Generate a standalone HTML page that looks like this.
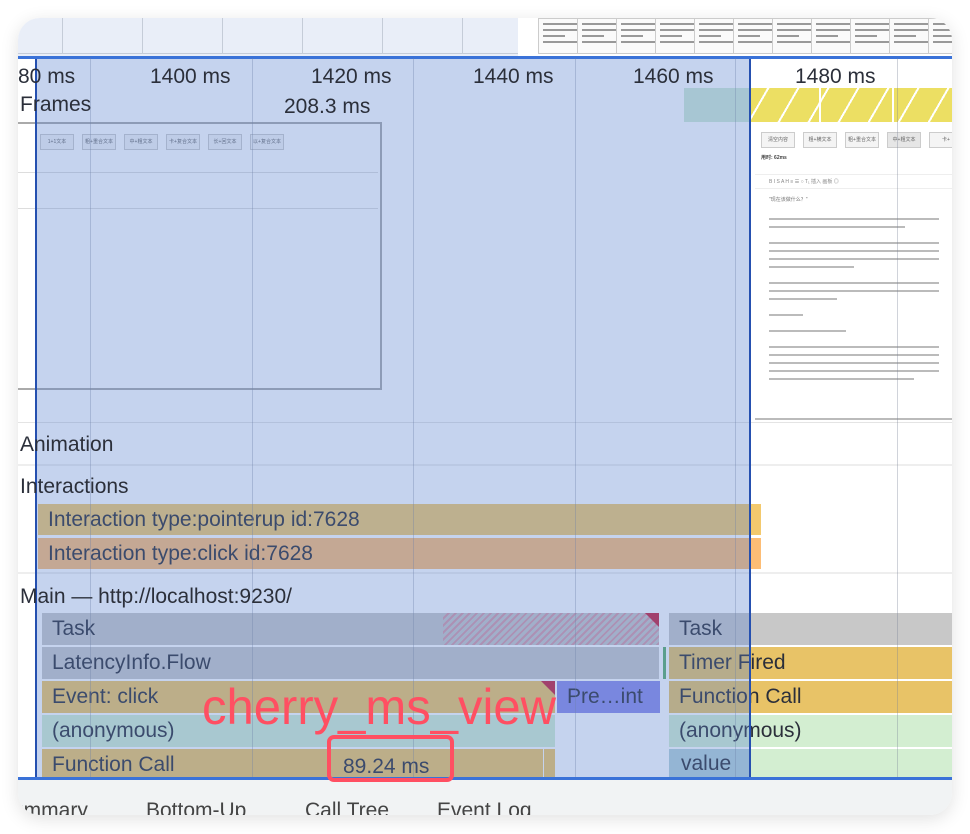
<!DOCTYPE html>
<html><head><meta charset="utf-8"><style>
*{margin:0;padding:0;box-sizing:border-box}
body{width:970px;height:834px;background:#fff;position:relative;overflow:hidden;font-family:"Liberation Sans","Noto Sans CJK SC",sans-serif;color:#2b2f3a}
.card{position:absolute;left:18px;top:18px;width:934px;height:797px;border-radius:22px;overflow:hidden;background:#fff;box-shadow:0 4px 18px rgba(0,0,0,.12)}
.a{position:absolute}
.t{position:absolute;font-size:21px;white-space:nowrap;line-height:1}
.g{position:absolute;top:40px;width:1px;height:720px;background:rgba(120,130,150,.35)}
.bar{position:absolute;height:32px;font-size:21px;line-height:32px;padding-left:10px;white-space:nowrap;overflow:hidden;color:#2b2f3a}
.thumb{position:absolute;top:0;height:36px;width:56px;background:#fafafa;border:1px solid #ccc}
.thumb i{display:block;height:2px;margin:4px 4px 0;background:#999;width:70%}
.btn{position:absolute;top:10px;width:34px;height:16px;border:1px solid #ccc;background:#f4f4f4;font-size:5px;text-align:center;line-height:14px;color:#666}
.ln{height:2px;background:#bbb;margin:6px 0 0}
</style></head><body>
<div class="card">
 <div class="a" style="left:0;top:0;width:934px;height:38px;background:#fff"></div>
 <div class="a" style="left:0;top:0;width:500px;height:38px;background:#e9eef8"></div>
 <div class="a" style="left:44px;top:0;width:1px;height:36px;background:#c5ccd8"></div>
 <div class="a" style="left:124px;top:0;width:1px;height:36px;background:#c5ccd8"></div>
 <div class="a" style="left:204px;top:0;width:1px;height:36px;background:#c5ccd8"></div>
 <div class="a" style="left:284px;top:0;width:1px;height:36px;background:#c5ccd8"></div>
 <div class="a" style="left:364px;top:0;width:1px;height:36px;background:#c5ccd8"></div>
 <div class="a" style="left:444px;top:0;width:1px;height:36px;background:#c5ccd8"></div>
 <div class="a" style="left:0;top:35px;width:500px;height:1px;background:#c5ccd8"></div>
 <div class="thumb" style="left:520px"><i></i><i></i><i style="width:40%"></i><i></i></div>
 <div class="thumb" style="left:559px"><i></i><i></i><i style="width:40%"></i><i></i></div>
 <div class="thumb" style="left:598px"><i></i><i></i><i style="width:40%"></i><i></i></div>
 <div class="thumb" style="left:637px"><i></i><i></i><i style="width:40%"></i><i></i></div>
 <div class="thumb" style="left:676px"><i></i><i></i><i style="width:40%"></i><i></i></div>
 <div class="thumb" style="left:715px"><i></i><i></i><i style="width:40%"></i><i></i></div>
 <div class="thumb" style="left:754px"><i></i><i></i><i style="width:40%"></i><i></i></div>
 <div class="thumb" style="left:793px"><i></i><i></i><i style="width:40%"></i><i></i></div>
 <div class="thumb" style="left:832px"><i></i><i></i><i style="width:40%"></i><i></i></div>
 <div class="thumb" style="left:871px"><i></i><i></i><i style="width:40%"></i><i></i></div>
 <div class="thumb" style="left:910px"><i></i><i></i><i style="width:40%"></i><i></i></div>
 <div class="a" style="left:0;top:38px;width:934px;height:3px;background:#3a72d8"></div>

 <div class="a" style="left:666px;top:70px;width:67px;height:34px;background:#d2ecd6"></div>
 <div class="a" style="left:733px;top:70px;width:201px;height:34px;background:#ecdf63;background-image:repeating-linear-gradient(120deg,transparent 0 14px,#fff 14px 16px,transparent 16px 26px)"></div>
 <div class="a" style="left:801px;top:70px;width:2px;height:34px;background:#fff"></div>
 <div class="a" style="left:874px;top:70px;width:2px;height:34px;background:#fff"></div>
 <div class="a" style="left:0;top:104px;width:364px;height:268px;background:#fff;border:2px solid #aaa;border-left:none">
  <div class="btn" style="left:22px">1+1文本</div><div class="btn" style="left:64px">粗+重合文本</div><div class="btn" style="left:106px">中+粗文本</div><div class="btn" style="left:148px">卡+复合文本</div><div class="btn" style="left:190px">长+回文本</div><div class="btn" style="left:232px">以+复合文本</div>
  <div class="a" style="left:0;top:48px;width:360px;height:1px;background:#ddd"></div>
  <div class="a" style="left:0;top:84px;width:360px;height:1px;background:#ddd"></div>
 </div>
 <div class="a" style="left:737px;top:104px;width:197px;height:296px;background:#fff;font-size:5px;color:#777;line-height:8px">
  <div class="btn" style="left:6px;top:10px">清空内容</div><div class="btn" style="left:48px;top:10px">粗+横文本</div><div class="btn" style="left:90px;top:10px">粗+重合文本</div><div class="btn" style="left:132px;top:10px;background:#e6e6e6">中+粗文本</div><div class="btn" style="left:174px;top:10px">卡+</div>
  <div class="a" style="left:6px;top:32px;font-weight:bold;color:#444">用时: 62ms</div>
  <div class="a" style="left:0;top:52px;width:197px;height:1px;background:#eee"></div>
  <div class="a" style="left:14px;top:56px;color:#888">B I S A H ≡ ☰ ○ T₁ 插入 画板 ◎</div>
  <div class="a" style="left:0;top:66px;width:197px;height:1px;background:#eee"></div>
  <div class="a" style="left:14px;top:74px;width:170px">
   <div>"现在该做什么？"</div><br>
   <div class="ln"></div><div class="ln" style="width:80%"></div><br>
   <div class="ln"></div><div class="ln"></div><div class="ln"></div><div class="ln" style="width:50%"></div><br>
   <div class="ln"></div><div class="ln"></div><div class="ln" style="width:40%"></div><br>
   <div class="ln" style="width:20%"></div><br><div class="ln" style="width:45%"></div><br>
   <div class="ln"></div><div class="ln"></div><div class="ln"></div><div class="ln"></div><div class="ln" style="width:85%"></div>
  </div>
 </div>
 <div class="a" style="left:737px;top:400px;width:197px;height:2px;background:#bbb"></div>

 <div class="a" style="left:0;top:404px;width:934px;height:1px;background:#e4e4e4"></div>
 <div class="a" style="left:0;top:446px;width:934px;height:2px;background:#eee"></div>
 <div class="a" style="left:0;top:554px;width:934px;height:2px;background:#eee"></div>

 <div class="bar" style="left:20px;top:486px;width:723px;height:31px;line-height:31px;background:#f3c96d">Interaction type:pointerup id:7628</div>
 <div class="bar" style="left:20px;top:520px;width:723px;height:31px;line-height:31px;background:#fdbd75">Interaction type:click id:7628</div>

 <div class="a" style="left:0;top:594px;width:934px;height:166px;background:#fff"></div>
 <div class="bar" style="left:24px;top:595px;width:617px;background:#c8c8c8">Task</div>
 <div class="a" style="left:425px;top:595px;width:216px;height:32px;background:repeating-linear-gradient(135deg,#c8c8c8 0 3px,#d99aa6 3px 5px)"></div>
 <div class="a" style="left:627px;top:595px;width:0;height:0;border-top:14px solid #c8203a;border-left:14px solid transparent"></div>
 <div class="bar" style="left:651px;top:595px;width:283px;background:#c8c8c8">Task</div>
 <div class="bar" style="left:24px;top:629px;width:617px;background:#c8c8c8">LatencyInfo.Flow</div>
 <div class="a" style="left:645px;top:629px;width:3px;height:32px;background:#5cae6a"></div>
 <div class="bar" style="left:651px;top:629px;width:283px;background:#e8c367">Timer Fired</div>
 <div class="bar" style="left:24px;top:663px;width:513px;background:#f1c665">Event: click</div>
 <div class="a" style="left:523px;top:663px;width:0;height:0;border-top:14px solid #c8203a;border-left:14px solid transparent"></div>
 <div class="bar" style="left:539px;top:663px;width:103px;background:#8b8be8">Pre…int</div>
 <div class="bar" style="left:651px;top:663px;width:283px;background:#e8c367">Function Call</div>
 <div class="bar" style="left:24px;top:697px;width:513px;background:#d3eed1">(anonymous)</div>
 <div class="bar" style="left:651px;top:697px;width:283px;background:#d3eed1">(anonymous)</div>
 <div class="bar" style="left:24px;top:731px;width:513px;height:29px;background:#f1c665">Function Call</div>
 <div class="a" style="left:525px;top:731px;width:1px;height:29px;background:#fff"></div>
 <div class="bar" style="left:651px;top:731px;width:283px;height:29px;background:#d3eed1">value</div>
 <div class="a" style="left:651px;top:731px;width:82px;height:29px;background:#d3eed1"></div>
 <div class="a" style="left:651px;top:731px;width:82px;height:29px;background:rgba(160,190,220,.6)"></div>
 <div class="t" style="left:663px;top:735px">value</div>
 <div class="t" style="left:325px;top:738px">89.24 ms</div>

 <div class="g" style="left:72px"></div><div class="g" style="left:234px"></div><div class="g" style="left:395px"></div><div class="g" style="left:557px"></div><div class="g" style="left:717px"></div><div class="g" style="left:879px"></div>

 <div class="a" style="left:17px;top:41px;width:716px;height:719px;background:rgba(89,129,206,.35);border-left:2px solid #2550b0;border-right:2px solid #2550b0"></div>
 <div class="a" style="left:0;top:759px;width:934px;height:3px;background:#3a72d8"></div>

 <div class="t" style="left:0;top:48px">80 ms</div>
 <div class="t" style="left:132px;top:48px">1400 ms</div>
 <div class="t" style="left:293px;top:48px">1420 ms</div>
 <div class="t" style="left:455px;top:48px">1440 ms</div>
 <div class="t" style="left:615px;top:48px">1460 ms</div>
 <div class="t" style="left:777px;top:48px">1480 ms</div>
 <div class="t" style="left:2px;top:76px">Frames</div>
 <div class="t" style="left:266px;top:78px">208.3 ms</div>
 <div class="t" style="left:2px;top:416px">Animation</div>
 <div class="t" style="left:2px;top:458px">Interactions</div>
 <div class="t" style="left:2px;top:568px">Main — http://localhost:9230/</div>

 <div class="a" style="left:0;top:762px;width:934px;height:35px;background:#f1f3f4"></div>
 <div class="t" style="left:-6px;top:782px;color:#444">ummary</div>
 <div class="t" style="left:128px;top:782px;color:#444">Bottom-Up</div>
 <div class="t" style="left:287px;top:782px;color:#444">Call Tree</div>
 <div class="t" style="left:419px;top:782px;color:#444">Event Log</div>

 <div class="a" style="left:184px;top:664px;font-size:50px;line-height:1;color:#ff4f62;white-space:nowrap;transform:scaleX(0.98);transform-origin:left">cherry_ms_view</div>
 <div class="a" style="left:309px;top:717px;width:127px;height:47px;border:4px solid #ff4f62;border-radius:7px"></div>
</div>
</body></html>
